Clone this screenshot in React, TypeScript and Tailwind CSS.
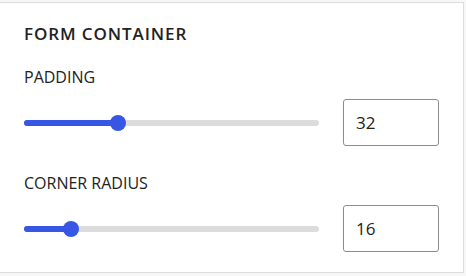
import { useState } from 'react';

// Settings panel: "Form container" section with two linked slider + number inputs.

function SliderField({
  label,
  value,
  onChange,
  max = 100,
}: {
  label: string;
  value: number;
  onChange: (v: number) => void;
  max?: number;
}) {
  const pct = Math.min(100, Math.max(0, (value / max) * 100));
  return (
    <div className="flex flex-col">
      <div className="text-[16px] leading-[24px] text-[#222]">{label}</div>
      <div className="mt-[10px] flex items-center gap-6">
        <div className="relative h-[6px] flex-1 rounded-full bg-[#dcdcdc]">
          <div className="h-full rounded-full bg-[#3656e3]" style={{ width: `${pct}%` }} />
          <div
            className="absolute top-1/2 h-4 w-4 -translate-x-1/2 -translate-y-1/2 rounded-full bg-[#3656e3]"
            style={{ left: `${pct}%` }}
          />
        </div>
        <input
          type="text"
          value={value}
          onChange={(e) => onChange(Number(e.target.value) || 0)}
          className="h-[47px] w-[96px] rounded-[3px] border border-[#8c8c8c] bg-white px-[12px] text-[17px] text-[#222] outline-none"
        />
      </div>
    </div>
  );
}

export default function App() {
  const [padding, setPadding] = useState(32);
  const [radius, setRadius] = useState(16);

  return (
    <div className="h-[276px] w-[466px] bg-[#f7f7f7] pt-[2px] pr-[2px] font-['Open_Sans',sans-serif]">
      <div className="h-[271px] border-t border-r border-b border-[#dddddd] bg-white pl-6 pr-6 pt-[19px]">
        <h2 className="text-[17px] font-semibold leading-[24px] tracking-[0.9px] text-[#222]">
          FORM CONTAINER
        </h2>
        <div className="mt-[19px] flex flex-col gap-[25px]">
          <SliderField label="PADDING" value={padding} onChange={setPadding} />
          <SliderField label="CORNER RADIUS" value={radius} onChange={setRadius} />
        </div>
      </div>
    </div>
  );
}
